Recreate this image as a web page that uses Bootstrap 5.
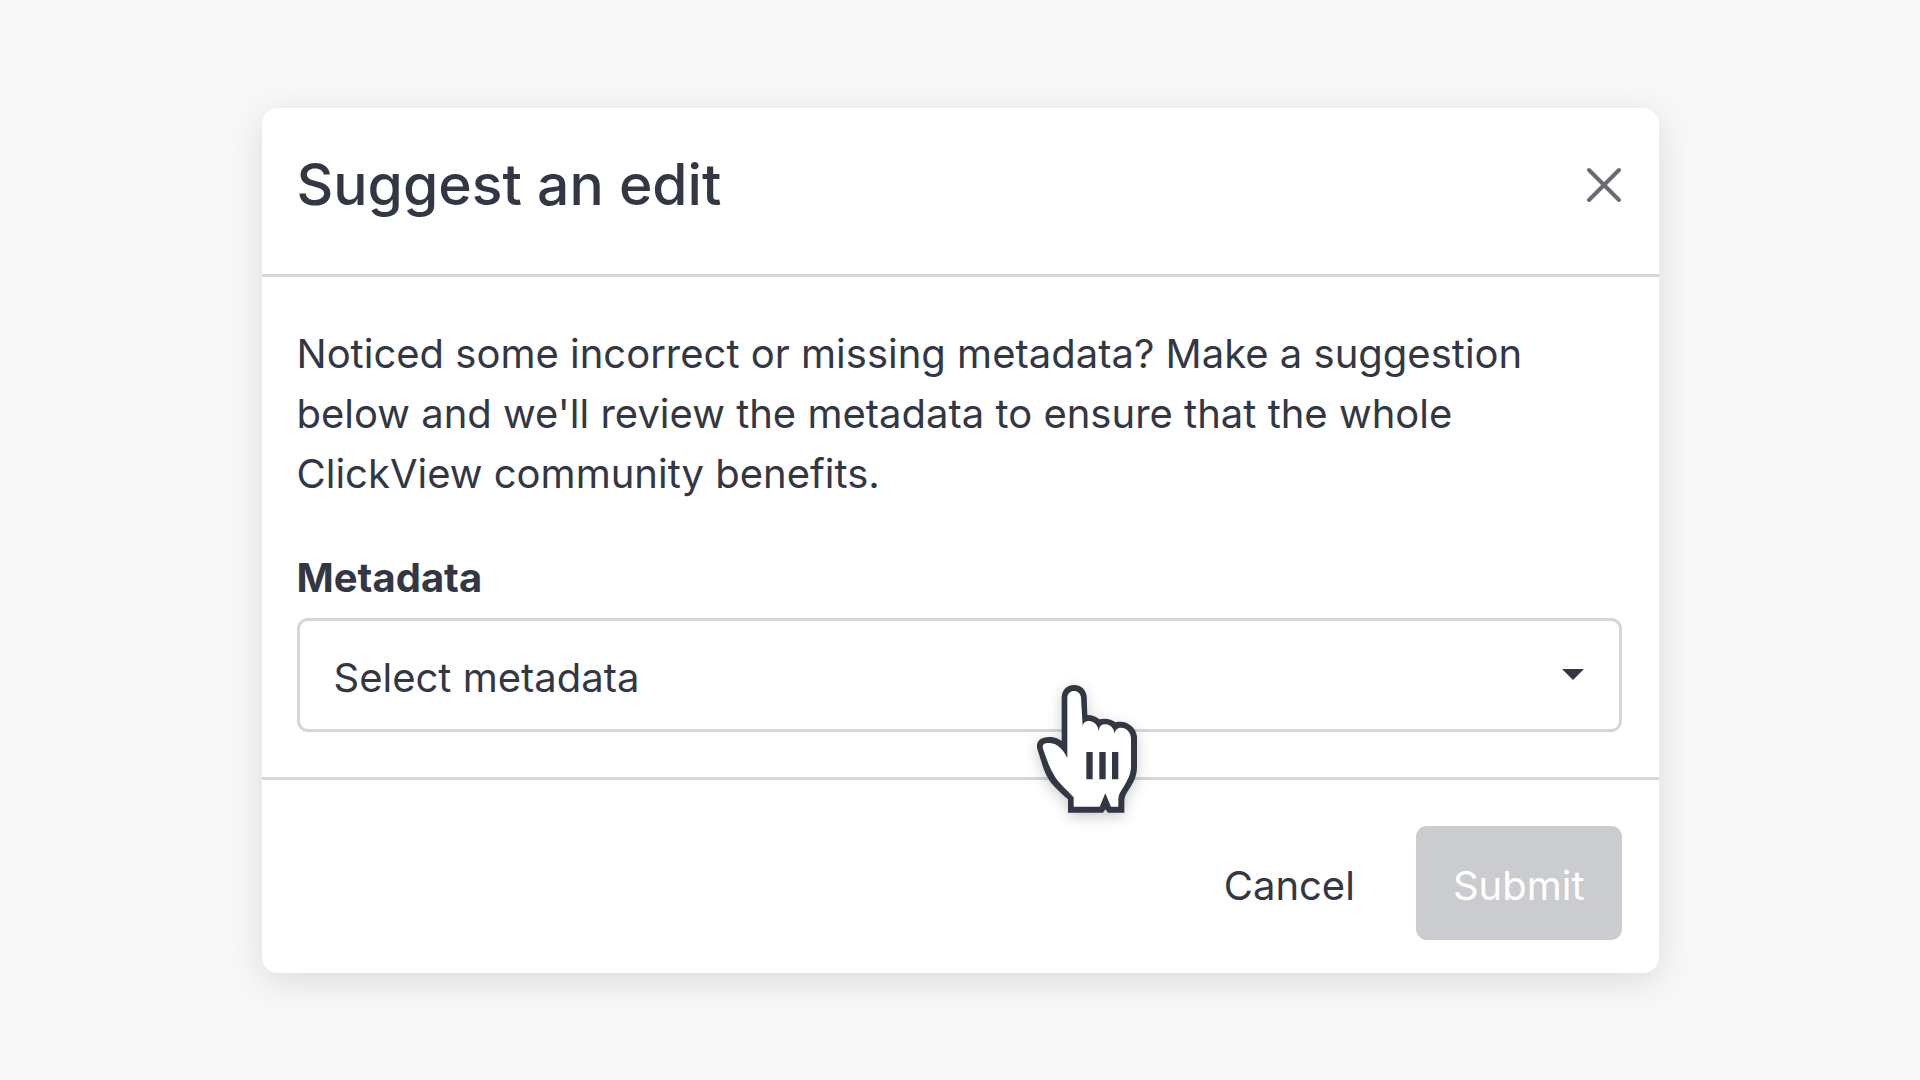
<!DOCTYPE html>
<html lang="en">
<head>
<meta charset="utf-8">
<meta name="viewport" content="width=device-width, initial-scale=1">
<title>Suggest an edit</title>
<link href="https://cdn.jsdelivr.net/npm/bootstrap@5.3.0/dist/css/bootstrap.min.css" rel="stylesheet">
<style>
  body { font-family: Inter, "Liberation Sans", sans-serif; font-size: 40px; line-height: 60px; color: #333744; background: #f8f8f8; }
  .edit-card { max-width: 1397px; border: 0; border-radius: 16px; color: #333744; box-shadow: 0 8px 36px rgba(0, 0, 0, .12); }
  .edit-card .card-header { padding: 42px 37px 54px 35px; background: none; border-bottom: 3px solid #d6d6d7; }
  .edit-card .card-body { padding: 47px 37px 45px 35px; color: inherit; }
  .edit-card .card-footer { padding: 46px 37px 33px; gap: 24px; background: none; border-top: 3px solid #d6d6d7; }
  .edit-title { font-size: 57px; line-height: 70px; font-weight: 500; }
  .close-btn { line-height: 0; color: #686a74; }
  .intro-text { margin-bottom: 44px; }
  .field-label { margin-bottom: 10px; font-weight: 700; }
  .edit-card .form-select { height: 114px; padding: 6px 80px 0 34px; font-size: 40px; line-height: 60px; color: inherit; border: 3px solid #d6d6d7; border-radius: 11px; background-color: #fff;
    background-image: url("data:image/svg+xml,%3Csvg xmlns='http://www.w3.org/2000/svg' viewBox='0 0 22 11'%3E%3Cpath fill='%23333744' d='M0 0h22L11 11z'/%3E%3C/svg%3E");
    background-size: 22px 11px; background-position: right 35px top 48px; }
  .edit-card .btn { height: 114px; padding: 6px 37px 0; font-size: 40px; line-height: 60px; border: 0; border-radius: 11px; color: inherit; }
  .edit-card .btn-submit:disabled { background: #cbccd0; color: #fff; opacity: 1; }
  .hand-pointer { left: calc(54% - 3px); top: 42px; width: 160px; height: 180px; pointer-events: none; z-index: 2; overflow: visible; filter: drop-shadow(0 4px 7px rgba(0, 0, 0, .2)); }
</style>
</head>
<body>
<main class="container-fluid min-vh-100 d-flex align-items-center justify-content-center p-3">
  <section class="card edit-card w-100" role="dialog" aria-labelledby="dialog-title">
    <header class="card-header d-flex align-items-center justify-content-between">
      <h1 class="edit-title mb-0" id="dialog-title">Suggest an edit</h1>
      <button type="button" class="close-btn border-0 bg-transparent p-0" aria-label="Close">
        <svg width="36" height="36" viewBox="0 0 36 36" fill="none" stroke="currentColor" stroke-width="4" stroke-linecap="round"><path d="M3 3l30 30M33 3L3 33"/></svg>
      </button>
    </header>
    <div class="card-body">
      <p class="intro-text">Noticed some incorrect or missing metadata? Make a suggestion below and we'll review the metadata to ensure that the whole ClickView community benefits.</p>
      <label class="field-label d-block" for="metadata">Metadata</label>
      <div class="position-relative">
        <select class="form-select" id="metadata">
          <option>Select metadata</option>
        </select>
        <svg class="hand-pointer position-absolute" viewBox="0 0 480 540" aria-hidden="true">
          <path fill="#333744" d="M177 458V418C150 394 130 376 118 356C104 334 96 300 85 268C80 244 92 232 120 231C138 231 148 236 158 243V110C160 88 175 75 195 75C216 75 230 88 233 108L235 165C250 165 262 170 271 178C290 173 308 178 320 187C352 180 380 200 384 230V320C384 350 372 368 362 385C352 400 346 410 346 422V458H297L289 448L282 458Z"/>
          <path fill="#fff" d="M194 440V412C170 385 150 370 138 350C122 325 112 295 102 266C98 252 108 248 122 249C145 250 165 270 175 295V112C176 100 184 93 195 93C206 93 214 100 216 112L221 200C222 188 230 183 240 183C256 184 267 196 270 215C270 200 275 193 290 193C304 194 315 205 317 221C318 210 325 203 336 203C356 204 366 220 366 236V318C366 345 354 362 344 380C334 395 328 405 328 418V440H306L289 400L272 440Z"/>
          <path fill="#333744" d="M232 276h19v82h-19zM271 276h19v82h-19zM309 276h19v82h-19z"/>
        </svg>
      </div>
    </div>
    <footer class="card-footer d-flex justify-content-end">
      <button type="button" class="btn">Cancel</button>
      <button type="submit" class="btn btn-submit" disabled>Submit</button>
    </footer>
  </section>
</main>
<script src="https://cdn.jsdelivr.net/npm/bootstrap@5.3.0/dist/js/bootstrap.bundle.min.js"></script>
</body>
</html>
